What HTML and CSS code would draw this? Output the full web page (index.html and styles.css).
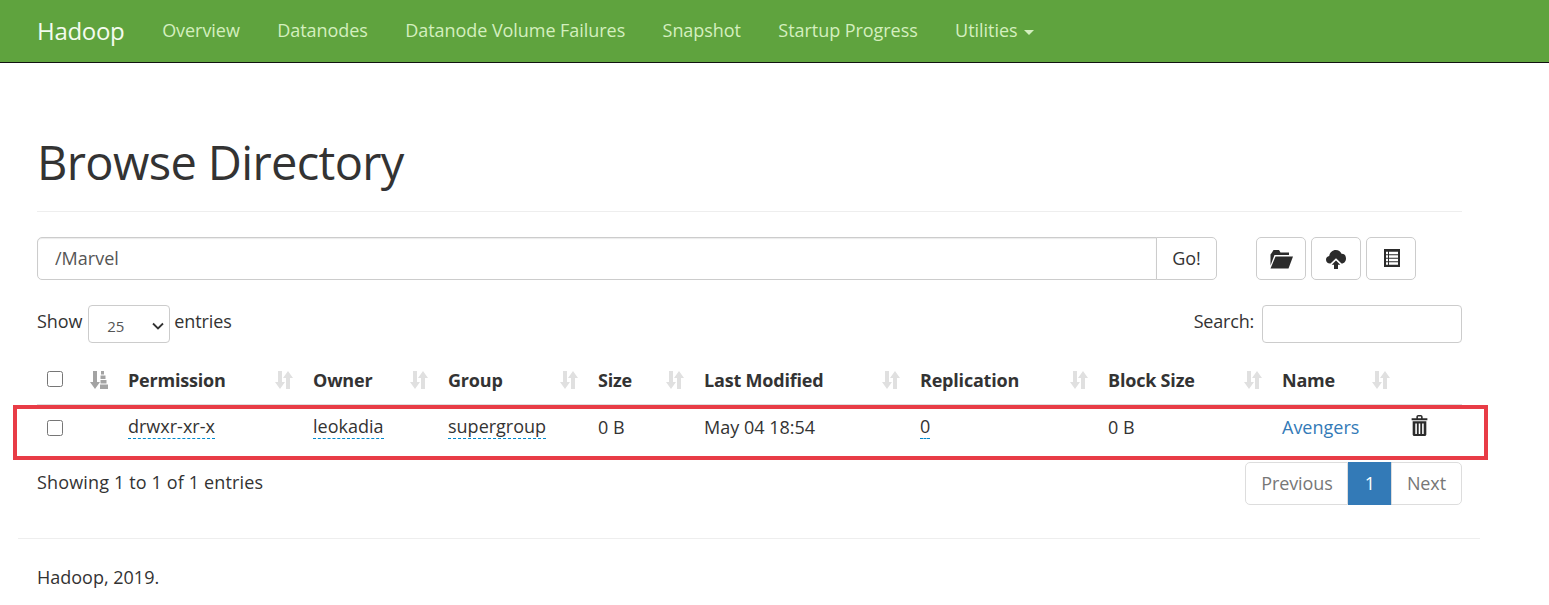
FILE: index.html
```html
<!DOCTYPE html>
<html lang="en">
<head>
    <meta charset="UTF-8">
    <title>Browsing HDFS</title>
    <link rel="stylesheet" href="styles.css">
</head>
<body>
    <svg class="sprites" width="0" height="0">
        <symbol id="i-sort" viewBox="0 0 18 18">
            <path d="M3 0h4v11h3l-5 7-5-7h3z"/>
            <path d="M11 18h4V7h3l-5-7-5 7h3z"/>
        </symbol>
        <symbol id="i-sort-asc" viewBox="0 0 18 18">
            <path d="M3 0h4v11h3l-5 7-5-7h3z"/>
            <path d="M11 0h3v3.500h-3zM10.500 4.500h5v3.500h-5zM10.500 9h6v3.500h-6zM10 13.500h8V18h-8z"/>
        </symbol>
    </svg>

    <nav class="navbar">
        <a class="brand" href="#">Hadoop</a>
        <ul class="nav">
            <li><a href="#">Overview</a></li>
            <li><a href="#">Datanodes</a></li>
            <li><a href="#">Datanode Volume Failures</a></li>
            <li><a href="#">Snapshot</a></li>
            <li><a href="#">Startup Progress</a></li>
            <li><a href="#">Utilities <span class="caret"></span></a></li>
        </ul>
    </nav>

    <div class="container">
        <div class="page-header">
            <h1>Browse Directory</h1>
        </div>

        <div class="path-row">
            <div class="input-group">
                <input class="path-input" type="text" value="/Marvel">
                <button class="btn go-btn">Go!</button>
            </div>
            <div class="tools">
                <button class="btn tool-btn" title="Create Directory">
                    <svg class="folder-icon" viewBox="0 0 24 20">
                        <path d="M3 3.500 4.500 1H10l1.500 2.500H20V6H5.500L1.500 16.500V5.500z"/>
                        <path d="M6.500 7.500H24L19.500 19.500H1.500z"/>
                    </svg>
                </button>
                <button class="btn tool-btn" title="Upload Files">
                    <svg class="cloud-icon" viewBox="0 0 20 20">
                        <path d="M4 14.500C1.700 14.500 0 12.800 0 10.700 0 8.800 1.300 7.300 3.200 7 3.800 3.500 6.500 1 9.800 1c2.700 0 4.800 1.500 5.700 3.800 2.700-.2 4.500 1.700 4.500 4.700 0 2.800-1.800 5-4.200 5h-.3L10 9.200 4.500 14.500z"/>
                        <path d="M10 11.500 14.300 15.800H12V20H8V15.800H5.700z"/>
                    </svg>
                </button>
                <button class="btn tool-btn" title="Cut &amp; Paste">
                    <svg class="list-icon" viewBox="0 0 16 16" preserveAspectRatio="none">
                        <path fill-rule="evenodd" d="M0 0h16v16H0zM2 2.500v2.200h2V2.500zM5 2.500v2.200h9V2.500zM2 5.600v2.200h2V5.600zM5 5.600v2.200h9V5.600zM2 8.700v2.200h2V8.700zM5 8.700v2.200h9V8.700zM2 11.800V14h2v-2.200zM5 11.800V14h9v-2.200z"/>
                    </svg>
                </button>
            </div>
        </div>

        <div class="table-top">
            <label class="length">Show
                <select class="length-select"><option>25</option></select>
                entries</label>
            <label class="search">Search:
                <input class="search-input" type="search"></label>
        </div>

        <table class="files">
            <colgroup>
                <col class="c-check"><col class="c-perm"><col class="c-owner"><col class="c-group"><col class="c-size">
                <col class="c-date"><col class="c-repl"><col class="c-block"><col class="c-name"><col class="c-del">
            </colgroup>
            <thead>
                <tr>
                    <th><div class="th-in"><input class="check" type="checkbox"><svg class="sort active"><use href="#i-sort-asc"/></svg></div></th>
                    <th><div class="th-in">Permission<svg class="sort"><use href="#i-sort"/></svg></div></th>
                    <th><div class="th-in">Owner<svg class="sort"><use href="#i-sort"/></svg></div></th>
                    <th><div class="th-in">Group<svg class="sort"><use href="#i-sort"/></svg></div></th>
                    <th><div class="th-in">Size<svg class="sort"><use href="#i-sort"/></svg></div></th>
                    <th><div class="th-in">Last Modified<svg class="sort"><use href="#i-sort"/></svg></div></th>
                    <th><div class="th-in">Replication<svg class="sort"><use href="#i-sort"/></svg></div></th>
                    <th><div class="th-in">Block Size<svg class="sort"><use href="#i-sort"/></svg></div></th>
                    <th><div class="th-in">Name<svg class="sort"><use href="#i-sort"/></svg></div></th>
                    <th></th>
                </tr>
            </thead>
            <tbody>
                <tr>
                    <td><input class="check" type="checkbox"></td>
                    <td><span class="editable">drwxr-xr-x</span></td>
                    <td><span class="editable">leokadia</span></td>
                    <td><span class="editable">supergroup</span></td>
                    <td>0 B</td>
                    <td>May 04 18:54</td>
                    <td><span class="editable">0</span></td>
                    <td>0 B</td>
                    <td><a class="file-link" href="#">Avengers</a></td>
                    <td>
                        <svg class="trash" viewBox="0 0 16 20">
                            <path fill-rule="evenodd" d="M5 3V1.800C5 .8 5.800 0 6.800 0h2.400C10.200 0 11 .8 11 1.800V3h4.500v2H.5V3zM6.500 3h3V1.500h-3zM1.500 6h13v12.500c0 .8-.7 1.500-1.500 1.500H3c-.8 0-1.500-.7-1.500-1.500zM4 8v10h1.500V8zM7.250 8v10h1.500V8zM10.500 8v10H12V8z"/>
                        </svg>
                    </td>
                </tr>
            </tbody>
        </table>

        <div class="table-bottom">
            <div class="info">Showing 1 to 1 of 1 entries</div>
            <ul class="pagination">
                <li class="page-item">Previous</li>
                <li class="page-item current">1</li>
                <li class="page-item">Next</li>
            </ul>
        </div>

        <div class="highlight"></div>

        <hr class="footer-rule">
        <p class="footer-text">Hadoop, 2019.</p>
    </div>
</body>
</html>
```

FILE: styles.css
```css
* {
    box-sizing: border-box;
}
html, body {
    margin: 0;
    padding: 0;
}
body {
    font-family: "Open Sans", "Noto Sans", Arial, sans-serif;
    font-size: 18px;
    color: #333;
    background-color: #fff;
    overflow: hidden;
}
a {
    text-decoration: none;
}
.sprites {
    position: absolute;
}

/* navbar */
.navbar {
    display: flex;
    align-items: center;
    height: 63px;
    padding: 0 0 2px 37px;
    background-color: #5fa33e;
    border-bottom: 1px solid #111;
}
.brand {
    font-size: 24px;
    letter-spacing: -0.3px;
    color: #f4fbef;
    margin-right: 19px;
}
.nav {
    display: flex;
    list-style: none;
    margin: 0;
    padding: 0;
}
.nav a {
    display: block;
    padding: 0 18.700px;
    font-size: 18px;
    letter-spacing: -0.05px;
    color: #d4efbf;
}
.caret {
    display: inline-block;
    width: 0;
    height: 0;
    margin-left: 2px;
    vertical-align: middle;
    border-top: 5px solid #d4efbf;
    border-left: 5px solid transparent;
    border-right: 5px solid transparent;
}

/* layout */
.container {
    position: relative;
    width: 1462px;
    margin-left: 18px;
    padding: 0 18px 0 19px;
}
.page-header {
    height: 149px;
    padding-top: 68px;
    border-bottom: 1px solid #eee;
}
h1 {
    margin: 0;
    font-size: 47px;
    font-weight: 400;
    line-height: 62px;
    letter-spacing: -0.650px;
    color: #333;
}

/* path row */
.path-row {
    display: flex;
    margin-top: 25px;
}
.input-group {
    display: flex;
    width: 1180px;
    height: 43px;
}
.path-input {
    flex: 1;
    padding: 0 17px 2px;
    font: inherit;
    color: #555;
    border: 1px solid #ccc;
    border-radius: 5px 0 0 5px;
    box-shadow: inset 0 1px 1px rgba(0, 0, 0, 0.08);
}
.btn {
    font: inherit;
    color: #333;
    background-color: #fff;
    border: 1px solid #ccc;
    border-radius: 5px;
}
.go-btn {
    width: 61px;
    margin-left: -1px;
    padding: 0 0 2px;
    border-radius: 0 5px 5px 0;
}
.tools {
    display: flex;
    gap: 5px;
    margin-left: 39px;
}
.tool-btn {
    display: flex;
    align-items: center;
    justify-content: center;
    width: 50px;
    height: 43px;
    padding: 0;
}
.tool-btn svg {
    fill: #2b2b2b;
}
.folder-icon {
    width: 24px;
    height: 20px;
}
.cloud-icon {
    width: 20px;
    height: 20px;
}
.list-icon {
    width: 16px;
    height: 18px;
    margin: 0 0 2px 1px;
}

/* datatable controls */
.table-top {
    display: flex;
    justify-content: space-between;
    height: 38px;
    margin-top: 25px;
    line-height: 32px;
}
.length {
    display: flex;
    gap: 5px;
    letter-spacing: -0.1px;
}
.length-select {
    appearance: none;
    width: 82px;
    height: 38px;
    margin: 0 -1px 0 1px;
    padding: 3px 0 0 18px;
    font-family: inherit;
    font-size: 15px;
    color: #555;
    background: #fff url("data:image/svg+xml,%3Csvg xmlns='http://www.w3.org/2000/svg' width='12' height='8'%3E%3Cpath d='M1 1.500l5 5 5-5' fill='none' stroke='%23333' stroke-width='1.800'/%3E%3C/svg%3E") no-repeat 63px 16px;
    border: 1px solid #ccc;
    border-radius: 4px;
}
.search {
    display: flex;
    gap: 8px;
    letter-spacing: -0.2px;
}
.search-input {
    width: 200px;
    height: 38px;
    border: 1px solid #ccc;
    border-radius: 4px;
}

/* table */
.files {
    width: 1425px;
    margin-top: 18px;
    table-layout: fixed;
    border-collapse: collapse;
}
.c-check { width: 81px; }
.c-perm { width: 185px; }
.c-owner { width: 135px; }
.c-group { width: 150px; }
.c-size { width: 106px; }
.c-date { width: 216px; }
.c-repl { width: 188px; }
.c-block { width: 174px; }
.c-name { width: 128px; }
.c-del { width: 62px; }
.files th {
    height: 44px;
    padding: 0 10px 6px;
    text-align: left;
    font-weight: 700;
    border-bottom: 2px solid #ddd;
}
.th-in {
    display: flex;
    justify-content: space-between;
    align-items: center;
    letter-spacing: -0.2px;
}
.files td {
    height: 46px;
    padding: 0 10px 4px;
}
.sort {
    width: 18px;
    height: 18px;
    fill: #e0e0e0;
}
.sort.active {
    fill: #a3a3a3;
}
.check {
    width: 16px;
    height: 16px;
    margin: 0 0 2px;
    vertical-align: middle;
}
.editable {
    display: inline-block;
    line-height: 24px;
    color: #333;
    border-bottom: 1px dashed #0088cc;
}
.file-link {
    color: #337ab7;
}
.trash {
    display: block;
    width: 17px;
    height: 21px;
    margin: -3px 0 0 1px;
    fill: #2b2b2b;
}

/* bottom */
.table-bottom {
    display: flex;
    justify-content: space-between;
    margin-top: 11px;
}
.info {
    padding-top: 8px;
    letter-spacing: 0.150px;
}
.pagination {
    display: flex;
    height: 43px;
    margin: 0;
    padding: 0;
    list-style: none;
}
.page-item {
    padding: 0 15px;
    line-height: 41px;
    letter-spacing: -0.1px;
    color: #777;
    background-color: #fff;
    border: 1px solid #ddd;
}
.page-item:first-child {
    padding-right: 14px;
    border-radius: 5px 0 0 5px;
}
.page-item:last-child {
    margin-left: -1px;
    border-radius: 0 5px 5px 0;
}
.page-item.current {
    padding: 0 16px;
    color: #fff;
    background-color: #337ab7;
    border-color: #337ab7;
}

/* the red box drawn over the screenshot */
.highlight {
    position: absolute;
    left: -5px;
    top: 342px;
    width: 1475px;
    height: 55px;
    border: 4px solid #e83c46;
}

.footer-rule {
    width: 1462px;
    margin: 33px 0 0 -19px;
    border: 0;
    border-top: 1px solid #eee;
}
.footer-text {
    margin: 26px 0 0;
}
```
